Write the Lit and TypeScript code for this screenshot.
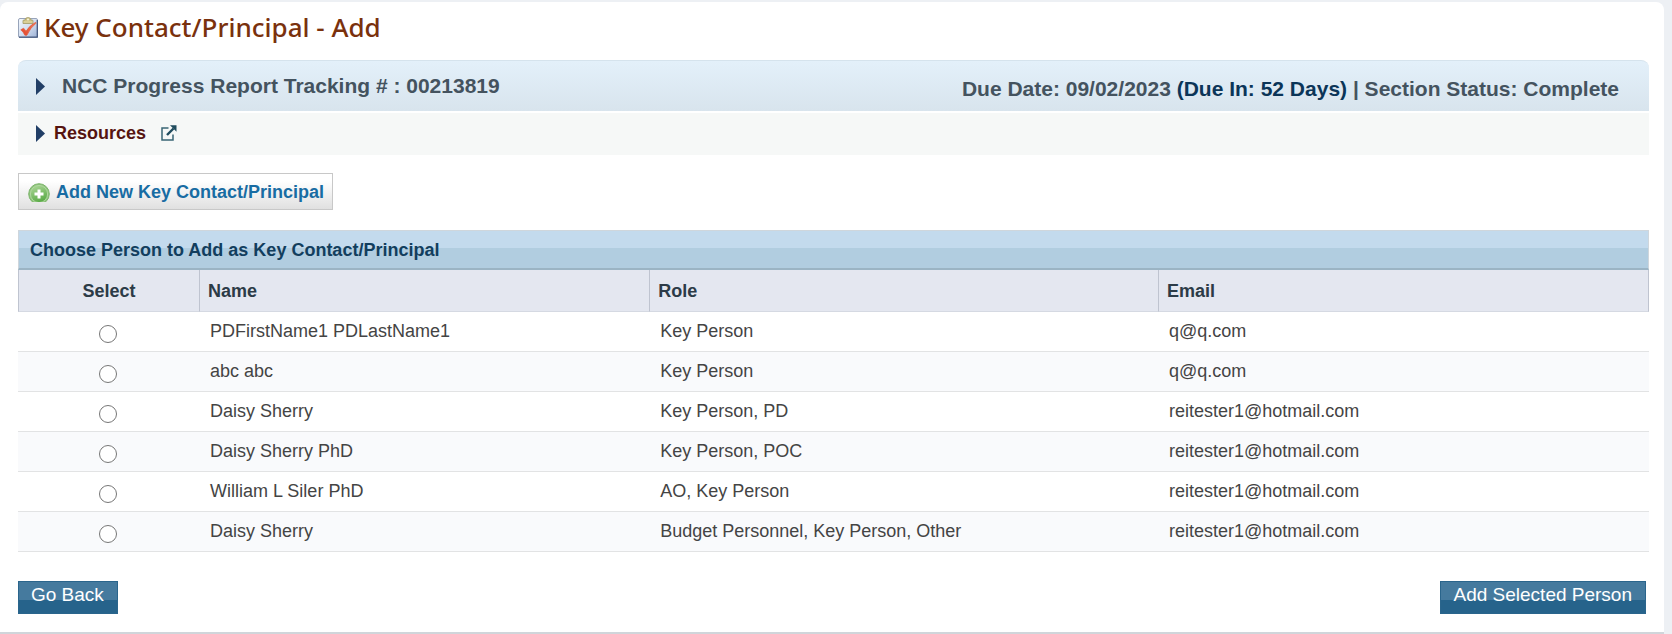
import { LitElement, html, css } from "lit";
import { customElement, state } from "lit/decorators.js";

interface Person {
  name: string;
  role: string;
  email: string;
}

const PEOPLE: Person[] = [
  { name: "PDFirstName1 PDLastName1", role: "Key Person", email: "q@q.com" },
  { name: "abc abc", role: "Key Person", email: "q@q.com" },
  { name: "Daisy Sherry", role: "Key Person, PD", email: "reitester1@hotmail.com" },
  { name: "Daisy Sherry PhD", role: "Key Person, POC", email: "reitester1@hotmail.com" },
  { name: "William L Siler PhD", role: "AO, Key Person", email: "reitester1@hotmail.com" },
  { name: "Daisy Sherry", role: "Budget Personnel, Key Person, Other", email: "reitester1@hotmail.com" },
];

const arrow = html`<svg viewBox="0 0 9 17" width="9" height="17" aria-hidden="true">
  <path d="M0 0L9 8.5L0 17Z" fill="#213e66" />
</svg>`;

const clipboard = html`<svg viewBox="0 0 20 21" width="20" height="21" aria-hidden="true">
  <defs>
    <linearGradient id="board" x1="0" y1="0" x2="1" y2="1">
      <stop offset="0" stop-color="#f4f8fd" />
      <stop offset="0.5" stop-color="#d3dff1" />
      <stop offset="1" stop-color="#9cb0d4" />
    </linearGradient>
    <linearGradient id="tick" x1="0" y1="1" x2="1" y2="0">
      <stop offset="0" stop-color="#e2432a" />
      <stop offset="1" stop-color="#f0805c" />
    </linearGradient>
  </defs>
  <rect x="0.5" y="1.5" width="19" height="19" rx="1.5" fill="url(#board)" stroke="#98a4ba" />
  <path d="M1 20.2H19.3V3" fill="none" stroke="#46597f" stroke-width="1.3" />
  <path d="M5 6.500V3.800Q5 3 6 3H7Q7.200 0.500 10 0.500T13 3H14Q15 3 15 3.800V6.500Z" fill="#cdc183" stroke="#a39a68" stroke-width="0.800" />
  <circle cx="10" cy="2.600" r="1" fill="#f8f5dc" />
  <path d="M5.500 5H14.500" stroke="#e6deac" />
  <path d="M2.800 12.800L5.600 11.200L8 14.200Q11.500 8.500 17.700 5.300L18 6.200Q12.500 10.500 8.900 18.200H6.900Q5.500 15 2.800 12.800Z" fill="url(#tick)" stroke="#e2573a" stroke-width="0.700" />
</svg>`;

const external = html`<svg viewBox="0 0 16 16" width="16" height="16" aria-hidden="true">
  <path d="M7.500 3H1V15H12V9.500" fill="none" stroke="#3a6675" stroke-width="1.500" />
  <path d="M6 10L12.500 3.500" stroke="#204c5e" stroke-width="2.400" />
  <path d="M9 0.300H15.500V6.800Z" fill="#204c5e" />
</svg>`;

const plus = html`<svg viewBox="0 0 22 19" width="22" height="19" aria-hidden="true">
  <defs>
    <linearGradient id="leaf" x1="0" y1="0" x2="0.4" y2="1">
      <stop offset="0" stop-color="#b0d99b" />
      <stop offset="1" stop-color="#5dac4a" />
    </linearGradient>
  </defs>
  <circle cx="11" cy="11" r="10.300" fill="#8fc47c" stroke="#7db56c" />
  <circle cx="11" cy="11" r="8.600" fill="url(#leaf)" stroke="#b7dba8" stroke-width="0.800" />
  <path d="M11 6.500V15.500M6.500 11H15.500" stroke="#fff" stroke-width="3" />
</svg>`;

@customElement("app-root")
export class AppRoot extends LitElement {
  static styles = css`
    :host {
      display: block;
      min-height: 100vh;
      background: #edf0f4;
      font-family: "Liberation Sans", Arial, sans-serif;
      font-size: 18px;
      line-height: 20px;
      color: #444;
    }
    * {
      box-sizing: border-box;
    }
    button {
      font: inherit;
      cursor: pointer;
    }
    svg {
      display: block;
      flex: none;
    }
    .page {
      padding: 2px 8px 0 0;
    }
    .panel {
      background: #fff;
      border-radius: 8px 8px 0 0;
      border-bottom: 2px solid #d0d5da;
      padding: 7px 15px 18px 18px;
    }
    .title {
      display: flex;
      align-items: center;
      gap: 6px;
      margin: 0 0 15px;
      font: 500 26px/36px "Noto Sans", "Lucida Sans", sans-serif;
      color: #7a310d;
    }
    .banner {
      display: flex;
      align-items: flex-start;
      justify-content: space-between;
      padding: 13px 30px 10px 18px;
      background: linear-gradient(#e3f0fa, #d8e4ed);
      border-top: 1px solid #d5e3ed;
      border-radius: 8px 8px 0 0;
      font-size: 21px;
      line-height: 24px;
      font-weight: bold;
      color: #44535f;
    }
    .toggle {
      display: flex;
      align-items: center;
      padding: 0;
      border: 0;
      background: none;
      color: inherit;
      font-weight: bold;
    }
    .tracking {
      gap: 17px;
    }
    .status {
      padding-top: 3px;
    }
    .due {
      color: #0b3558;
    }
    .resources {
      display: flex;
      align-items: center;
      gap: 15px;
      margin-top: 2px;
      padding: 10px 18px 12px;
      background: #f6f8f7;
      color: #561410;
    }
    .resources .toggle {
      gap: 9px;
    }
    .add {
      display: flex;
      align-items: center;
      gap: 6px;
      margin: 18px 0 20px;
      padding: 8px 8px 7px 9px;
      border: 1px solid #c8c8c8;
      background: linear-gradient(#fff 20%, #e0e0e0);
      color: #186ca3;
      font-weight: bold;
    }
    .people {
      width: 100%;
      table-layout: fixed;
      border-collapse: separate;
      border-spacing: 0;
    }
    .people caption {
      padding: 9px 11px 8px;
      border: 1px solid #cfd6dc;
      border-bottom: 2px solid #9bb4c4;
      background: linear-gradient(#c3daed 0 45%, #b1cde0 45%);
      text-align: left;
      font-weight: bold;
      color: #123e5e;
    }
    .people th {
      height: 42px;
      padding: 0 8px;
      background: #e4e7f0;
      border: solid #bfc4d0;
      border-width: 0 0 1px 1px;
      border-bottom-color: #d5d9e2;
      text-align: left;
      color: #2c3b47;
    }
    .people th:last-child {
      border-right-width: 1px;
    }
    .people th:first-child {
      text-align: center;
    }
    .people td {
      padding: 9px 11px 8px;
      vertical-align: top;
      border-bottom: 1px solid #e2e3e4;
    }
    .people td:first-child {
      padding-right: 13px;
    }
    .people tbody tr:nth-child(even) {
      background: #f9fafc;
    }
    .select {
      width: 11.1%;
    }
    .name {
      width: 27.6%;
    }
    .role {
      width: 31.2%;
    }
    .radio {
      display: block;
      width: 18px;
      height: 18px;
      margin: 4px auto 0;
    }
    .actions {
      display: flex;
      justify-content: space-between;
      margin-top: 29px;
      padding-right: 3px;
    }
    .action {
      padding: 3px 13px 8px 12px;
      border: 1px solid #2a658c;
      background: linear-gradient(#457a9e 0 57%, #26638b 57%);
      color: #fff;
      font-size: 19px;
    }
  `;

  @state() private selected = -1;

  render() {
    return html`
      <div class="page">
        <main class="panel">
          <h1 class="title">${clipboard}Key Contact/Principal - Add</h1>
          <section class="banner">
            <button class="toggle tracking" aria-expanded="false">
              ${arrow}<span>NCC Progress Report Tracking # : 00213819</span>
            </button>
            <span class="status"
              >Due Date: 09/02/2023 <span class="due">(Due In: 52 Days)</span> | Section Status: Complete</span
            >
          </section>
          <section class="resources">
            <button class="toggle" aria-expanded="false">${arrow}<span>Resources</span></button>
            <a href="#resources" aria-label="Open resources in a new window">${external}</a>
          </section>
          <button class="add">${plus}<span>Add New Key Contact/Principal</span></button>
          <table class="people">
            <caption>Choose Person to Add as Key Contact/Principal</caption>
            <thead>
              <tr>
                <th class="select" scope="col">Select</th>
                <th class="name" scope="col">Name</th>
                <th class="role" scope="col">Role</th>
                <th scope="col">Email</th>
              </tr>
            </thead>
            <tbody>
              ${PEOPLE.map(
                (person, i) => html`<tr>
                  <td>
                    <input
                      class="radio"
                      type="radio"
                      name="person"
                      id="person-${i}"
                      .checked=${this.selected === i}
                      @change=${() => (this.selected = i)}
                    />
                  </td>
                  <td><label for="person-${i}">${person.name}</label></td>
                  <td>${person.role}</td>
                  <td>${person.email}</td>
                </tr>`
              )}
            </tbody>
          </table>
          <div class="actions">
            <button class="action">Go Back</button>
            <button class="action">Add Selected Person</button>
          </div>
        </main>
      </div>
    `;
  }
}
